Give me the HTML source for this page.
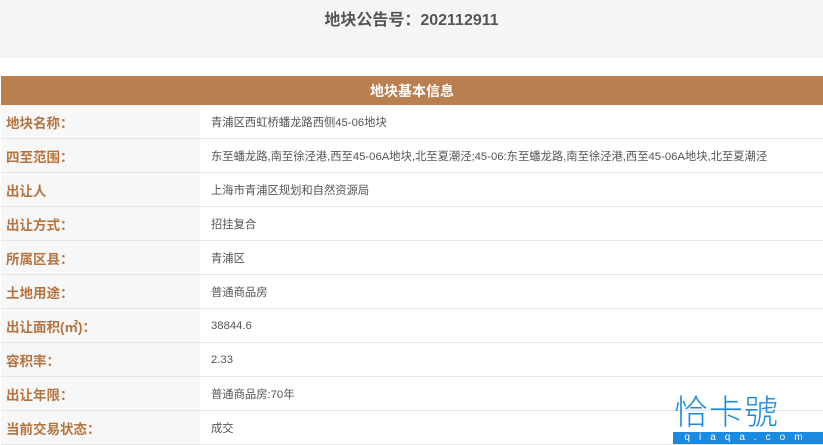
<!DOCTYPE html>
<html><head><meta charset="utf-8"><style>
body{margin:0;width:823px;height:444px;overflow:hidden;background:#fff;font-family:"Liberation Sans","Noto Sans CJK SC",sans-serif;position:relative}
.top{height:58px;background:#f5f5f5;text-align:center;font-size:16px;font-weight:bold;color:#555;line-height:42px}
table{position:absolute;top:76px;left:1px;width:822px;border-collapse:collapse}
th{background:#b97f4f;color:#fff;height:29px;font-size:14px;font-weight:bold;padding:0}
td{height:33px;border-bottom:1px solid #e4e4e4;font-size:11.3px;color:#555;padding:0 0 0 11px}
td.l{width:194px;background:#f7f7f7;color:#b5743f;font-weight:bold;font-size:13.5px;padding-left:5px}
.wm{position:absolute;left:674px;top:394px;color:#1a8be0;font-size:34px;letter-spacing:1px;line-height:38px;font-weight:300}
.bar{position:absolute;left:673px;top:432px;width:150px;height:12px;background:#1a8be0;color:#fff;font-size:10px;line-height:12px;letter-spacing:9px;text-align:center}
</style></head><body>
<div class="top">地块公告号：202112911</div>
<table>
<tr><th colspan="2">地块基本信息</th></tr>
<tr><td class="l">地块名称：</td><td>青浦区西虹桥蟠龙路西侧45-06地块</td></tr>
<tr><td class="l">四至范围：</td><td>东至蟠龙路,南至徐泾港,西至45-06A地块,北至夏潮泾;45-06:东至蟠龙路,南至徐泾港,西至45-06A地块,北至夏潮泾</td></tr>
<tr><td class="l">出让人</td><td>上海市青浦区规划和自然资源局</td></tr>
<tr><td class="l">出让方式：</td><td>招挂复合</td></tr>
<tr><td class="l">所属区县：</td><td>青浦区</td></tr>
<tr><td class="l">土地用途：</td><td>普通商品房</td></tr>
<tr><td class="l">出让面积(㎡)：</td><td>38844.6</td></tr>
<tr><td class="l">容积率：</td><td>2.33</td></tr>
<tr><td class="l">出让年限：</td><td>普通商品房:70年</td></tr>
<tr><td class="l">当前交易状态：</td><td>成交</td></tr>
</table>
<div class="wm">恰卡號</div>
<div class="bar">qiaqa.com</div>
</body></html>
